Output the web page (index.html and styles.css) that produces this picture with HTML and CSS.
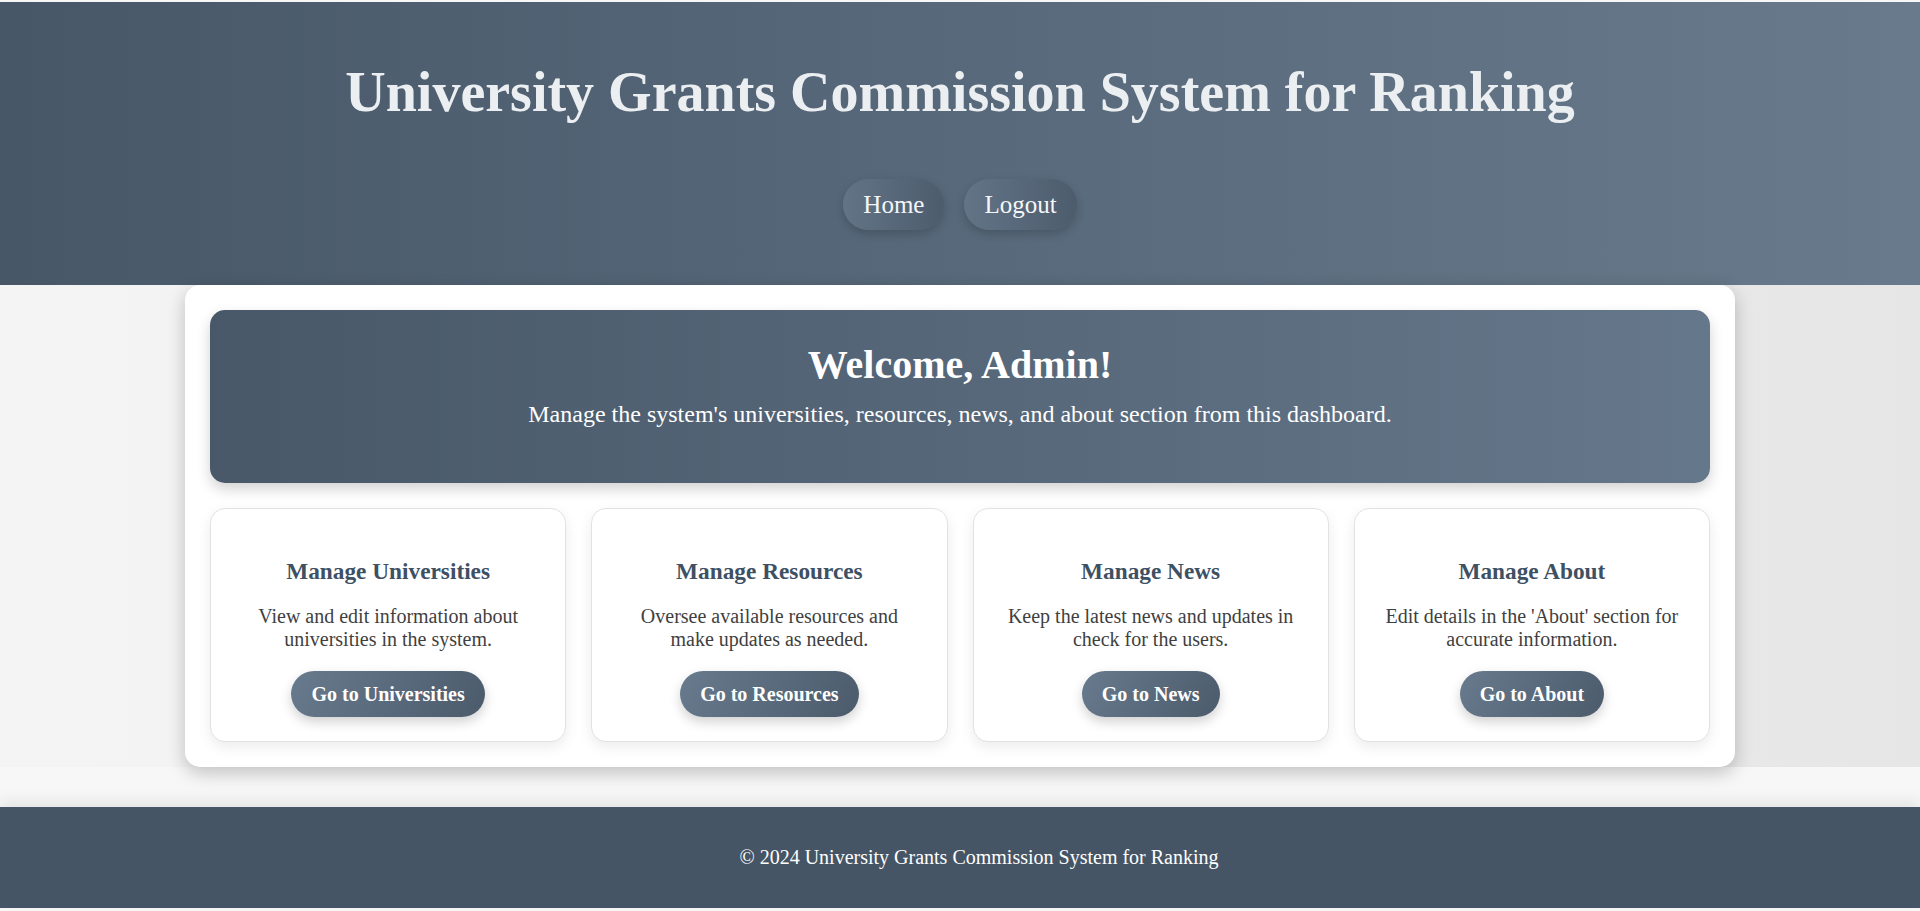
FILE: index.html
```html
<!DOCTYPE html>
<html lang="en">
<head>
<meta charset="utf-8">
<title>Admin Dashboard</title>
<link rel="stylesheet" href="styles.css">
</head>
<body>
<header class="site-header">
  <h1 class="site-title">University Grants Commission System for Ranking</h1>
  <nav class="site-nav">
    <a class="nav-link" href="#">Home</a>
    <a class="nav-link" href="#">Logout</a>
  </nav>
</header>
<div class="page">
  <main class="dashboard">
    <section class="welcome">
      <h2 class="welcome-title">Welcome, Admin!</h2>
      <p class="welcome-text">Manage the system's universities, resources, news, and about section from this dashboard.</p>
    </section>
    <section class="cards">
      <div class="card">
        <h3 class="card-title">Manage Universities</h3>
        <p class="card-text">View and edit information about universities in the system.</p>
        <a class="card-btn" href="#">Go to Universities</a>
      </div>
      <div class="card">
        <h3 class="card-title">Manage Resources</h3>
        <p class="card-text">Oversee available resources and make updates as needed.</p>
        <a class="card-btn" href="#">Go to Resources</a>
      </div>
      <div class="card">
        <h3 class="card-title">Manage News</h3>
        <p class="card-text">Keep the latest news and updates in check for the users.</p>
        <a class="card-btn" href="#">Go to News</a>
      </div>
      <div class="card">
        <h3 class="card-title">Manage About</h3>
        <p class="card-text">Edit details in the 'About' section for accurate information.</p>
        <a class="card-btn" href="#">Go to About</a>
      </div>
    </section>
  </main>
</div>
<footer class="site-footer">
  <p class="footer-text">&copy; 2024 University Grants Commission System for Ranking</p>
</footer>
</body>
</html>
```
FILE: styles.css
```css
* { box-sizing: border-box; }

html, body {
  margin: 0;
  padding: 0;
}

body {
  font-family: "Liberation Serif", "Times New Roman", serif;
  background: #f7f7f7;
  padding: 2px 0;
}

.site-header {
  background: linear-gradient(90deg, #475768 0%, #566779 45%, #687a8b 100%);
  color: #eef0f2;
  text-align: center;
  padding: 58px 20px 55px;
}

.site-title {
  margin: 0;
  font-size: 56px;
  line-height: 64px;
  font-weight: bold;
  color: #eceff1;
}

.site-nav {
  margin-top: 55px;
  display: flex;
  justify-content: center;
  gap: 20px;
}

.nav-link {
  display: inline-block;
  height: 51px;
  padding: 10px 20px;
  font-size: 25px;
  line-height: 31px;
  color: #f4f6f8;
  text-decoration: none;
  border-radius: 30px;
  background: linear-gradient(90deg, #637487 0%, #4c5c6d 100%);
  box-shadow: 0 4px 10px rgba(0, 0, 0, 0.18);
}

.page {
  background: linear-gradient(90deg, #f4f4f4 0%, #efefef 50%, #e6e6e6 100%);
}

.dashboard {
  max-width: 1550px;
  margin: 0 auto;
  padding: 25px;
  background: #ffffff;
  border-radius: 15px;
  box-shadow: 0 6px 18px rgba(0, 0, 0, 0.22);
}

.welcome {
  background: linear-gradient(90deg, #485869 0%, #566779 50%, #65778a 100%);
  color: #ffffff;
  text-align: center;
  border-radius: 15px;
  padding: 32px 20px 55px;
  box-shadow: 0 6px 14px rgba(0, 0, 0, 0.18);
}

.welcome-title {
  margin: 0 0 12px;
  font-size: 40px;
  line-height: 46px;
  font-weight: bold;
}

.welcome-text {
  margin: 0;
  font-size: 24px;
  line-height: 28px;
}

.cards {
  margin-top: 25px;
  display: grid;
  grid-template-columns: repeat(4, 1fr);
  gap: 25px;
}

.card {
  border: 1px solid #e2e2e2;
  border-radius: 15px;
  background: #ffffff;
  text-align: center;
  padding: 49px 25px 24px;
  box-shadow: 0 5px 14px rgba(0, 0, 0, 0.08);
  display: flex;
  flex-direction: column;
  align-items: center;
}

.card-title {
  margin: 0 0 20px;
  font-size: 23.3px;
  line-height: 27px;
  font-weight: bold;
  color: #3e5063;
}

.card-text {
  margin: 0 0 20px;
  font-size: 20px;
  line-height: 23px;
  color: #3f3f3f;
}

.card-btn {
  display: inline-block;
  height: 46px;
  padding: 11px 20px;
  font-size: 20px;
  line-height: 24px;
  font-weight: bold;
  color: #ffffff;
  text-decoration: none;
  border-radius: 25px;
  background: linear-gradient(120deg, #687a8d 0%, #4b5b6c 100%);
  box-shadow: 0 5px 12px rgba(0, 0, 0, 0.18);
}

.site-footer {
  margin-top: 40px;
  background: #455566;
  color: #ffffff;
  text-align: center;
  padding: 39px 0 39px 38px;
  box-shadow: 0 -6px 14px rgba(0, 0, 0, 0.08);
}

.footer-text {
  margin: 0;
  font-size: 20px;
  line-height: 23px;
}
```
